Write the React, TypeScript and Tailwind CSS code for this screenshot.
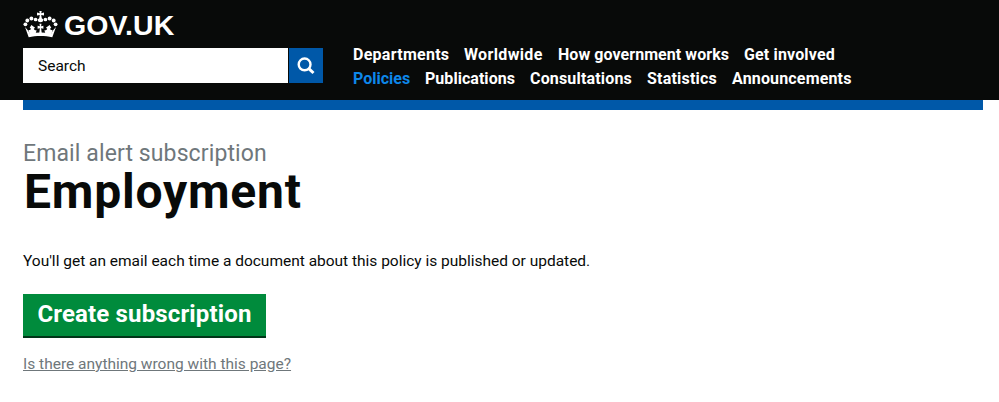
import React from 'react';

type NavItem = { label: string; cls: string };

const firstRow: NavItem[] = [
  { label: 'Departments', cls: 'w-[96px] tracking-[0.27px]' },
  { label: 'Worldwide', cls: 'w-[79px] tracking-[0.35px]' },
  { label: 'How government works', cls: 'w-[171px] tracking-[0.06px]' },
  { label: 'Get involved', cls: 'w-[92px] tracking-[0.15px]' },
];

const secondRow: NavItem[] = [
  { label: 'Policies', cls: 'w-[57px] text-[#0d87ea]' },
  { label: 'Publications', cls: 'w-[90px] tracking-[0.04px]' },
  { label: 'Consultations', cls: 'w-[102px] tracking-[0.17px]' },
  { label: 'Statistics', cls: 'w-[70px] tracking-[0.2px]' },
  { label: 'Announcements', cls: 'w-[120px] tracking-[0.16px]' },
];

function Crown() {
  return (
    <svg width="36" height="28" viewBox="0 0 36 28" fill="#fff" aria-hidden="true">
      <path d="M16.300 1h2.400l-.5 2.200 2.800-.6v3l-2.800-.6.600 3.200c.9.5 1.400 1.100 1.400 1.900 0 1.400-1.200 2.200-2.700 2.200s-2.700-.8-2.700-2.200c0-.8.5-1.400 1.400-1.900l.6-3.200-2.800.6v-3l2.800.6z" />
      <circle cx="12.600" cy="9.500" r="1.850" />
      <circle cx="8.400" cy="8.500" r="1.950" />
      <circle cx="4.300" cy="10.500" r="1.900" />
      <circle cx="2.400" cy="14.300" r="1.900" />
      <circle cx="22.400" cy="9.500" r="1.850" />
      <circle cx="26.600" cy="8.500" r="1.950" />
      <circle cx="30.700" cy="10.500" r="1.900" />
      <circle cx="32.600" cy="14.300" r="1.900" />
      {/* side arches and the curved base band */}
      <path d="M2 17 5.700 27.200c7.300-1.500 16.300-1.500 23.600 0L33 17l-3.300 3.800-1.300 2.700c-6.800-1.200-15-1.200-21.800 0l-1.300-2.700z" />
      {/* crosses standing on the band */}
      <path d="M16.500 13.800h2l-.4 2.500 2.300-.6v3l-2.300-.5.800 6h-2.800l.8-6-2.300.5v-3l2.300.6z" />
      <path d="m8.400 15-1.700 2.700 1.300 1.100c-.4 1-1.300 1.500-2.500 1.100l1.100 4.800 5.800-.8c.5-1.200 1-2.300 1.100-3.900-1.100.5-2.300 0-2.700-1.300l1.300-1z" />
      <path d="m26.600 15 1.700 2.700-1.300 1.100c.4 1 1.300 1.500 2.500 1.100l-1.100 4.800-5.800-.8c-.5-1.200-1-2.300-1.100-3.900 1.100.5 2.300 0 2.700-1.300l-1.300-1z" />
    </svg>
  );
}

function NavRow({ items }: { items: NavItem[] }) {
  return (
    <ul className="flex h-6 gap-[15px]">
      {items.map((item) => (
        <li key={item.label} className={item.cls}>
          <a href="#">{item.label}</a>
        </li>
      ))}
    </ul>
  );
}

export default function App() {
  return (
    <div className="h-[402px] overflow-hidden bg-white font-['Roboto',sans-serif] text-[#080a09]">
      <header className="h-[100px] bg-[#080a09] pl-[23px]">
        <a href="#" className="flex h-12 items-start gap-[5px] pt-[10px] text-white">
          <Crown />
          <span className="-mt-[3px] font-['Liberation_Sans',sans-serif] text-[28.5px] leading-9 font-bold tracking-[0.1px]">GOV.UK</span>
        </a>
        <div className="flex">
          <form className="flex h-[35px] w-[300px] shrink-0 gap-px">
            <div className="flex w-[265px] items-center bg-white pl-[15px] text-[15.5px] leading-[36px]">Search</div>
            <button type="button" aria-label="Search" className="flex w-[34px] items-center justify-center bg-[#0058a8]">
              <svg width="18" height="18" viewBox="0 0 18 18" fill="none" stroke="#fff">
                <circle cx="7.600" cy="7.400" r="5.900" strokeWidth="2.4" />
                <path d="m11.800 11.600 4.700 4.400" strokeWidth="3" />
              </svg>
            </button>
          </form>
          <nav className="-mt-[5px] ml-[30px] text-[16px] leading-6 font-bold whitespace-nowrap text-white">
            <NavRow items={firstRow} />
            <NavRow items={secondRow} />
          </nav>
        </div>
      </header>
      <div className="ml-[23px] h-[10px] w-[960px] bg-[#0058a8]" />
      <main className="flex flex-col items-start pl-[23px] whitespace-nowrap">
        <p className="mt-[29px] text-[23px] leading-[30px] tracking-[0.11px] text-[#6f777b]">Email alert subscription</p>
        <h1 className="-mt-[2px] pl-px text-[48px] leading-[50px] font-bold tracking-[0.8px]">Employment</h1>
        <p className="mt-8 text-[15.5px] leading-[25px] tracking-[-0.01px]">
          You'll get an email each time a document about this policy is published or updated.
        </p>
        <button type="button" className="mt-[20px] h-11 w-[243px] border-b-2 border-[#003618] bg-[#008b3c] text-[24px] leading-[38px] font-bold tracking-[0.15px] text-white">
          <span className="block pb-0.5">Create subscription</span>
        </button>
        <a href="#" className="mt-[14px] text-[15.5px] leading-6 text-[#6f777b] underline">
          Is there anything wrong with this page?
        </a>
      </main>
    </div>
  );
}
